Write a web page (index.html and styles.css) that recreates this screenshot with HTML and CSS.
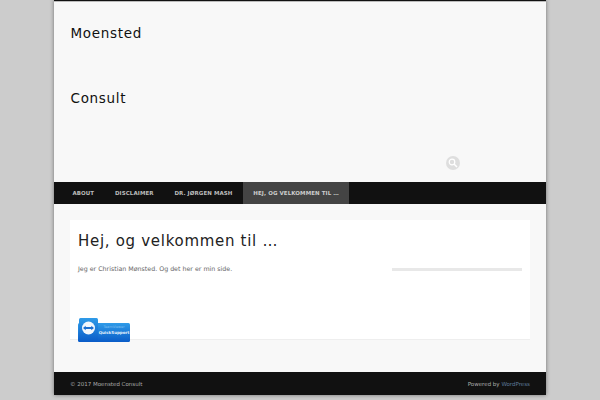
FILE: index.html
```html
<!DOCTYPE html>
<html lang="en">
<head>
    <meta charset="UTF-8">
    <title>Moensted Consult</title>
    <link rel="stylesheet" href="styles.css">
</head>
<body>
    <div class="wrapper">
        <header class="site-header">
            <div class="site-title">Moensted<br>Consult</div>
            <div class="search-row">
                <svg class="search-icon" width="14" height="14" viewBox="0 0 14 14">
                    <circle cx="7" cy="7" r="7" fill="#dedede"/>
                    <circle cx="6" cy="6" r="2.8" fill="none" stroke="#fff" stroke-width="1.2"/>
                    <path d="M8 8l3 3" stroke="#fff" stroke-width="1.5"/>
                </svg>
            </div>
        </header>
        <nav class="main-nav">
            <a href="#">About</a>
            <a href="#">Disclaimer</a>
            <a href="#">Dr. Jørgen Mash</a>
            <a href="#" class="current">Hej, og velkommen til …</a>
        </nav>
        <main class="content">
            <div class="card">
                <h1>Hej, og velkommen til …</h1>
                <div class="columns">
                    <p>Jeg er Christian Mønsted. Og det her er min side.</p>
                    <div class="side-bar"></div>
                </div>
                <div class="badge">
                    <svg width="52" height="25" viewBox="0 0 52 25">
                        <defs>
                            <linearGradient id="blue" x1="0" y1="0" x2="0" y2="1">
                                <stop offset="0" stop-color="#2f9be8"/>
                                <stop offset="1" stop-color="#0a5cc8"/>
                            </linearGradient>
                        </defs>
                        <rect x="0" y="5" width="52" height="19" rx="1.5" fill="url(#blue)"/>
                        <rect x="1" y="0" width="19" height="24" rx="1.5" fill="url(#blue)"/>
                        <circle cx="10.5" cy="10" r="6.5" fill="#f2f7fc"/>
                        <path d="M5 10l2.7-2.2v1.3h5.6V7.800L16 10l-2.700 2.200v-1.300H7.700v1.300z" fill="#1b6fd0"/>
                        <text class="badge-top" x="36" y="10" text-anchor="middle">TeamViewer</text>
                        <text class="badge-label" x="36" y="15.500" text-anchor="middle">QuickSupport</text>
                    </svg>
                </div>
            </div>
        </main>
        <footer class="site-footer">
            <span>© 2017 Moensted Consult</span>
            <span>Powered by <a href="#">WordPress</a></span>
        </footer>
    </div>
</body>
</html>
```

FILE: styles.css
```css
html, body {
    margin: 0;
    padding: 0;
}
body {
    background-color: #cccccc;
    font-family: "DejaVu Sans", sans-serif;
    height: 400px;
    overflow: hidden;
}
.wrapper {
    width: 492px;
    margin: 0 auto;
    background-color: #f8f8f8;
    border-top: 1px solid #111;
    box-shadow: 0 0 4px rgba(0,0,0,0.45);
}
.site-header {
    height: 181px;
    padding: 0 16px;
    border-top: 1px solid #bbbbbb;
    display: flex;
    flex-direction: column;
    box-sizing: border-box;
}
.site-title {
    font-size: 13.500px;
    line-height: 65px;
    letter-spacing: 0.700px;
    color: #111;
    margin-top: -1px;
    padding-left: 0.500px;
}
.search-row {
    display: flex;
    justify-content: flex-end;
    padding: 25px 70px 0 0;
}
.search-icon {
    display: block;
}
.main-nav {
    display: flex;
    height: 22px;
    padding-left: 8px;
    background-color: #111;
}
.main-nav a {
    padding: 0 10.400px;
    line-height: 22px;
    font-size: 5.500px;
    font-weight: bold;
    letter-spacing: 0.080px;
    text-transform: uppercase;
    text-decoration: none;
    color: #bbbbbb;
}
.main-nav a.current {
    background-color: #444;
    color: #cccccc;
}
.content {
    height: 168px;
    padding: 16px;
    box-sizing: border-box;
}
.card {
    height: 120px;
    padding: 0 8px;
    background-color: #fff;
    border-bottom: 1px solid #eeeeee;
    box-sizing: border-box;
    display: flex;
    flex-direction: column;
}
h1 {
    margin: 11px 0 0;
    font-size: 15px;
    line-height: 20px;
    font-weight: normal;
    letter-spacing: 0.700px;
    color: #222;
}
.columns {
    display: flex;
    justify-content: space-between;
    align-items: center;
    margin-top: 12px;
}
.columns p {
    margin: 0;
    font-size: 6.300px;
    line-height: 12px;
    color: #666;
}
.side-bar {
    width: 130px;
    height: 3px;
    background-color: #e8e8e8;
}
.badge {
    margin-top: 43px;
    height: 25px;
}
.badge svg {
    display: block;
}
.badge-top {
    font-size: 3.500px;
    fill: #7fbdf0;
}
.badge-label {
    font-size: 4px;
    font-weight: bold;
    fill: #e6f2fc;
}
.site-footer {
    height: 23px;
    padding: 0 16px;
    background-color: #111;
    display: flex;
    justify-content: space-between;
    align-items: center;
    font-size: 5.500px;
    color: #aaaaaa;
}
.site-footer a {
    color: #5c7a99;
    text-decoration: none;
}
```
